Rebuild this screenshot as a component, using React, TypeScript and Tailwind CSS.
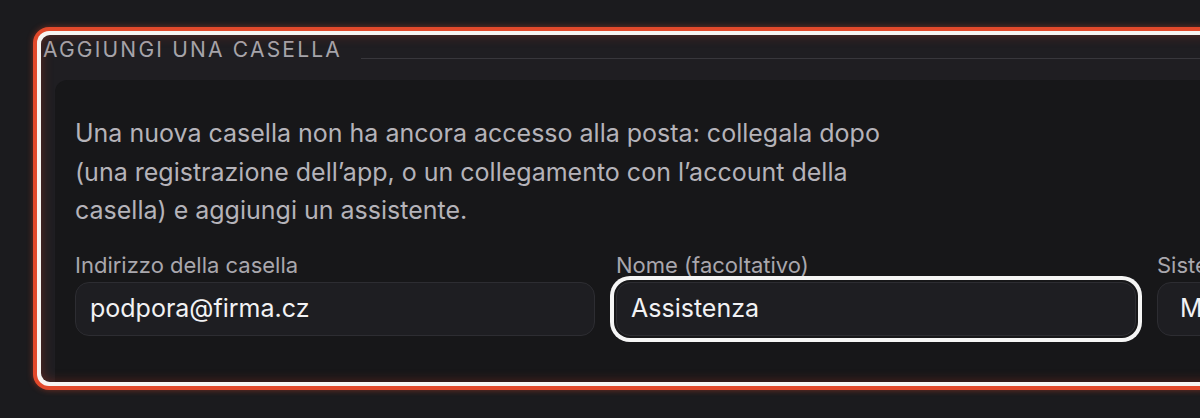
import React from "react";

export default function App() {
  return (
    <div
      className="w-[1200px] h-[418px] overflow-hidden bg-[#1b1b1e] pt-[27px] pl-[33px]"
      style={{ fontFamily: "Inter, 'Noto Sans', sans-serif" }}
    >
      <div className="w-[1220px] rounded-[16px] bg-[#e2492b] p-[4px] shadow-[0_0_6px_rgba(226,73,43,0.45)]">
        <div className="rounded-[12px] bg-[#f7f4f2] p-[4px]">
          <div className="relative h-[347px] overflow-hidden rounded-[9px] bg-[#1f1e22]">
            <div className="flex items-end pl-[2px] pt-[3px]">
              <span className="text-[21px] leading-[24px] tracking-[2.2px] text-[#a6a4aa]">
                AGGIUNGI UNA CASELLA
              </span>
              <div className="mb-[3px] ml-[19px] h-[1.5px] flex-1 bg-[#38373c]" />
            </div>
            <div className="ml-[14px] mt-[18px] h-[400px] rounded-tl-[12px] bg-[#171719] pl-[20px] pt-[34px]">
              <p className="max-w-[840px] text-[25px] leading-[38.5px] text-[#b5b3b9]">
                Una nuova casella non ha ancora accesso alla posta: collegala dopo (una registrazione dell’app, o un collegamento con l’account della casella) e aggiungi un assistente.
              </p>
              <div className="mt-[21px] grid grid-cols-[520px_520px_520px] gap-x-[21px]">
                <div className="flex flex-col gap-[3px]">
                  <label className="text-[22px] leading-[28px] text-[#a9a7ad]">Indirizzo della casella</label>
                  <div className="flex h-[54px] items-center rounded-[14px] border border-[#2d2d32] bg-[#1e1e22] pl-[14px] text-[25px] text-[#f2f2f4]">
                    podpora@firma.cz
                  </div>
                </div>
                <div className="flex flex-col gap-[3px]">
                  <label className="text-[22px] leading-[28px] text-[#a9a7ad]">Nome (facoltativo)</label>
                  <div className="flex h-[54px] items-center rounded-[14px] border border-[#2d2d32] bg-[#1e1e22] pl-[14px] text-[25px] text-[#f2f2f4] shadow-[0_0_0_2px_#171719,0_0_0_6px_#f5f5f5]">
                    Assistenza
                  </div>
                </div>
                <div className="flex flex-col gap-[3px]">
                  <label className="text-[22px] leading-[28px] text-[#a9a7ad]">Sistema di posta</label>
                  <div className="flex h-[54px] items-center rounded-[14px] border border-[#2d2d32] bg-[#1e1e22] pl-[22px] text-[25px] text-[#f2f2f4]">
                    Microsoft 365
                  </div>
                </div>
              </div>
            </div>
            <div className="pointer-events-none absolute inset-0 rounded-[9px] shadow-[inset_0_0_12px_rgba(190,55,35,0.4)]" />
          </div>
        </div>
      </div>
    </div>
  );
}
